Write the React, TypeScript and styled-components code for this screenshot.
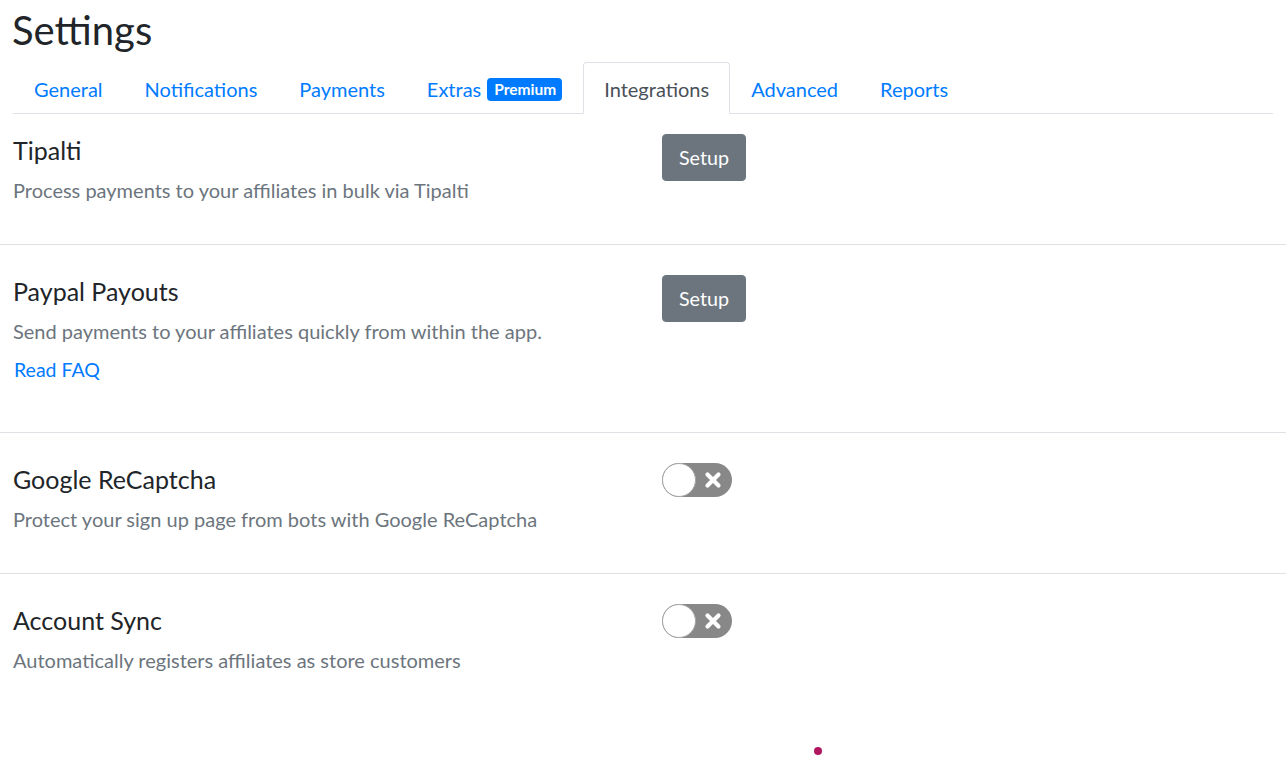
import React from "react";
import styled, { createGlobalStyle } from "styled-components";

const GlobalStyle = createGlobalStyle`
* { box-sizing: border-box; }
body {
    margin: 0;
    background: #fff;
    font-family: Lato, "Open Sans", sans-serif;
    color: #212529;
}
`;

const Page = styled.div`
    padding: 6px 13px 0 13px;
`;

const Heading = styled.h1`
    margin: 0 0 8px -1px;
    font-size: 40px;
    font-weight: 400;
    line-height: 48px;
    color: #212529;
`;

const Tabs = styled.ul`
    display: flex;
    margin: 0;
    padding: 0;
    list-style: none;
    border-bottom: 1px solid #dee2e6;
`;

const Tab = styled.li<{ $active?: boolean }>`
    display: flex;
    align-items: center;
    margin-bottom: -1px;
    padding: 11px 20px 9px;
    border: 1px solid ${(props) => (props.$active ? "#dee2e6" : "transparent")};
    border-bottom-color: ${(props) => (props.$active ? "#fff" : "transparent")};
    border-radius: 4px 4px 0 0;
    background: ${(props) => (props.$active ? "#fff" : "transparent")};
    font-size: 20px;
    line-height: 30px;
    color: ${(props) => (props.$active ? "#495057" : "#007bff")};
`;

const Badge = styled.span`
    margin-left: 6px;
    padding: 0 6px 0 7px;
    height: 23px;
    margin-top: 1px;
    border-radius: 4px;
    background: #007bff;
    color: #fff;
    font-size: 15.5px;
    font-weight: 700;
    line-height: 23px;
`;

const IntegrationList = styled.div`
    margin: 0 -13px;
`;

const Row = styled.section`
    display: grid;
    grid-template-columns: 649px auto;
    align-items: start;
    padding: 31px 13px 39px;
    border-bottom: 1px solid #dee2e6;
    &:first-child {
        padding-top: 21px;
    }
    &:last-child {
        border-bottom: none;
    }
`;

const Info = styled.div`
    display: flex;
    flex-direction: column;
    align-items: flex-start;
`;

const Title = styled.h3`
    margin: 0 0 10px;
    font-size: 25px;
    font-weight: 400;
    line-height: 30px;
    color: #212529;
`;

const Description = styled.p`
    margin: 0;
    font-size: 20px;
    line-height: 30px;
    color: #6c757d;
`;

const FaqLink = styled.a`
    margin: 9px 0 8px 1px;
    font-size: 19.5px;
    line-height: 30px;
    color: #007bff;
    text-decoration: none;
`;

const SetupButton = styled.button`
    margin-top: -1px;
    padding: 8px 16px;
    border: 1px solid #6c757d;
    border-radius: 4px;
    background: #6c757d;
    color: #fff;
    font-family: inherit;
    font-size: 19.7px;
    line-height: 29px;
    cursor: pointer;
`;

const Switch = styled.button<{ $on?: boolean }>`
    position: relative;
    width: 70px;
    height: 34px;
    margin-top: -1px;
    padding: 0;
    border: none;
    border-radius: 17px;
    background: ${(props) => (props.$on ? "#28a745" : "#888")};
    cursor: pointer;
`;

const Knob = styled.span`
    position: absolute;
    top: 0;
    left: 0;
    width: 34px;
    height: 34px;
    border-radius: 50%;
    background: #fff;
    border: 1px solid #a8a8a8;
`;

const Cross = styled.svg`
    position: absolute;
    top: 8px;
    left: 42px;
`;

const Spinner = styled.span`
    position: absolute;
    left: 814px;
    top: 747px;
    width: 8px;
    height: 8px;
    border-radius: 50%;
    background: #b0175e;
`;

interface IIntegration {
    id: string;
    title: string;
    description: string;
    kind: "setup" | "toggle";
    faq?: boolean;
}

const integrations: IIntegration[] = [
    { id: "tipalti", title: "Tipalti", description: "Process payments to your affiliates in bulk via Tipalti", kind: "setup" },
    { id: "paypal", title: "Paypal Payouts", description: "Send payments to your affiliates quickly from within the app.", kind: "setup", faq: true },
    { id: "recaptcha", title: "Google ReCaptcha", description: "Protect your sign up page from bots with Google ReCaptcha", kind: "toggle" },
    { id: "sync", title: "Account Sync", description: "Automatically registers affiliates as store customers", kind: "toggle" },
];

const tabs = ["General", "Notifications", "Payments", "Extras", "Integrations", "Advanced", "Reports"];

function App() {
    return (
        <Page>
            <GlobalStyle />
            <Heading>Settings</Heading>
            <Tabs>
                {tabs.map((tab) => (
                    <Tab key={tab} $active={tab === "Integrations"}>
                        {tab}
                        {tab === "Extras" && <Badge>Premium</Badge>}
                    </Tab>
                ))}
            </Tabs>
            <IntegrationList>
                {integrations.map((item) => (
                    <Row key={item.id}>
                        <Info>
                            <Title>{item.title}</Title>
                            <Description>{item.description}</Description>
                            {item.faq && <FaqLink href="#">Read FAQ</FaqLink>}
                        </Info>
                        <div>
                            {item.kind === "setup" ? (
                                <SetupButton>Setup</SetupButton>
                            ) : (
                                <Switch>
                                    <Knob />
                                    <Cross width="18" height="18" viewBox="0 0 18 18">
                                        <path d="M3.5 3.5L14.5 14.5M14.5 3.5L3.5 14.5" stroke="#fff" strokeWidth="4.2" strokeLinecap="round" />
                                    </Cross>
                                </Switch>
                            )}
                        </div>
                    </Row>
                ))}
            </IntegrationList>
            <Spinner />
        </Page>
    );
}
export default App;
